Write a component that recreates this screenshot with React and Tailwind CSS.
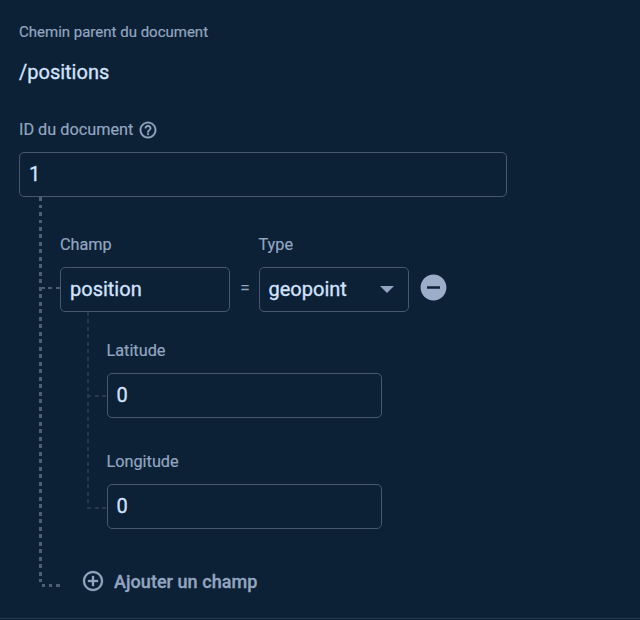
const labelText =
  "relative top-px h-5 whitespace-nowrap text-[16.25px] leading-5 text-[#93a5c0] [-webkit-text-stroke:0.2px]";
const box =
  "flex h-[45px] items-center rounded-[5px] border border-[#47586c] pb-px pl-[9px] text-[20px] leading-6 text-[#d3e3fd] [-webkit-text-stroke:0.3px]";

function HelpIcon() {
  return (
    <svg className="relative top-px left-px size-5 fill-[#93a5c0] stroke-[#93a5c0] stroke-[0.3]" viewBox="0 0 24 24">
      <path d="M11 18h2v-2h-2v2zm1-16C6.48 2 2 6.48 2 12s4.48 10 10 10 10-4.48 10-10S17.52 2 12 2zm0 18c-4.41 0-8-3.59-8-8s3.59-8 8-8 8 3.59 8 8-3.59 8-8 8zm0-14c-2.21 0-4 1.79-4 4h2c0-1.1.9-2 2-2s2 .9 2 2c0 2-3 1.75-3 5h2c0-2.25 3-2.5 3-5 0-2.21-1.79-4-4-4z" />
    </svg>
  );
}

function AddIcon() {
  return (
    <svg className="size-6 fill-[#93a5c0] stroke-[#93a5c0] stroke-[0.3]" viewBox="0 0 24 24">
      <path d="M13 7h-2v4H7v2h4v4h2v-4h4v-2h-4V7zm-1-5C6.48 2 2 6.48 2 12s4.48 10 10 10 10-4.48 10-10S17.52 2 12 2zm0 18c-4.41 0-8-3.59-8-8s3.59-8 8-8 8 3.59 8 8-3.59 8-8 8z" />
    </svg>
  );
}

function RemoveIcon() {
  return (
    <svg className="size-[31px] fill-[#9badc8]" viewBox="0 0 24 24">
      <path d="M12 2C6.48 2 2 6.48 2 12s4.48 10 10 10 10-4.48 10-10S17.52 2 12 2zm5 11H7v-2h10v2z" />
    </svg>
  );
}

function Coordinate({ label, value, connector }) {
  return (
    <div className="flex">
      <div
        className={`${connector} h-0.5 w-[18px] bg-[repeating-linear-gradient(270deg,transparent_0_1px,#26384d_1px_4.7px,transparent_4.7px_7.5px)]`}
      />
      <div>
        <div className={`${labelText} -left-[0.5px]`}>{label}</div>
        <div className={`${box} mt-[13px] w-[275px]`}>
          <span className="-ml-[0.5px]">{value}</span>
        </div>
      </div>
    </div>
  );
}

export default function App() {
  return (
    <main className="flex h-[620px] w-[640px] flex-col overflow-hidden bg-[#0c2136] pl-[19px] pt-[22px] font-['Roboto',sans-serif]">
      <div className="h-5 text-[15px] leading-5 text-[#93a5c0] [-webkit-text-stroke:0.2px]">Chemin parent du document</div>
      <div className="mt-[18px] h-6 text-[20px] leading-6 text-[#d3e3fd] [-webkit-text-stroke:0.3px]">/positions</div>
      <div className="mt-[35px] flex h-5 items-center gap-[4px]">
        <span className={labelText}>ID du document</span>
        <HelpIcon />
      </div>
      <div className={`${box} mt-[13px] w-[488px]`}>1</div>

      <div className="flex h-[419px] pl-5">
        <div className="h-[385px] w-[3px] bg-[repeating-linear-gradient(180deg,#4d5e75_0_3.75px,transparent_3.75px_7.5px)]" />
        <div className="flex flex-col">
          <div className="flex pt-[37px]">
            <div className="mt-[53px] h-0.5 w-[18px] bg-[repeating-linear-gradient(270deg,#4d5e75_0_4.3px,transparent_4.3px_7.6px)]" />
            <div>
              <div className={labelText}>Champ</div>
              <div className={`${box} mt-[13px] w-[170px]`}>position</div>
            </div>
            <div className="mt-[44px] w-[29px] pl-px text-center text-[18px] leading-5 text-[#93a5c0]">=</div>
            <div>
              <div className={`${labelText} -left-[0.5px]`}>Type</div>
              <div className={`${box} mt-[13px] w-[150px] justify-between pr-[14px]`}>
                <span className="-ml-[0.5px]">geopoint</span>
                <svg className="mt-px h-[7px] w-[14px] fill-[#93a5c0]" viewBox="0 0 14 7">
                  <path d="M0 0h14L7 7z" />
                </svg>
              </div>
            </div>
            <div className="ml-[9px] mt-[37.5px]">
              <RemoveIcon />
            </div>
          </div>

          <div className="flex h-[217px] pl-[45px]">
            <div className="h-[197px] w-0.5 bg-[repeating-linear-gradient(180deg,#26384d_0_3.75px,transparent_3.75px_7.5px)]" />
            <div className="flex flex-col gap-[33px] pt-[28px]">
              <Coordinate label="Latitude" value="0" connector="mt-[55px]" />
              <Coordinate label="Longitude" value="0" connector="mt-[56px]" />
            </div>
          </div>

          <div className="mt-[40px] flex h-6 items-center">
            <div className="mt-[9px] h-[3px] w-[18px] bg-[repeating-linear-gradient(270deg,#4d5e75_0_3.75px,transparent_3.75px_7.5px)]" />
            <div className="ml-[21px] flex items-center gap-[9px] text-[18px] font-medium leading-6 text-[#93a5c0] [-webkit-text-stroke:0.3px]">
              <AddIcon />
              <span className="mt-px whitespace-nowrap tracking-[0.05px]">Ajouter un champ</span>
            </div>
          </div>
        </div>
      </div>
      <div className="mt-[2px] -ml-[19px] h-px shrink-0 bg-[#26384d]" />
    </main>
  );
}
